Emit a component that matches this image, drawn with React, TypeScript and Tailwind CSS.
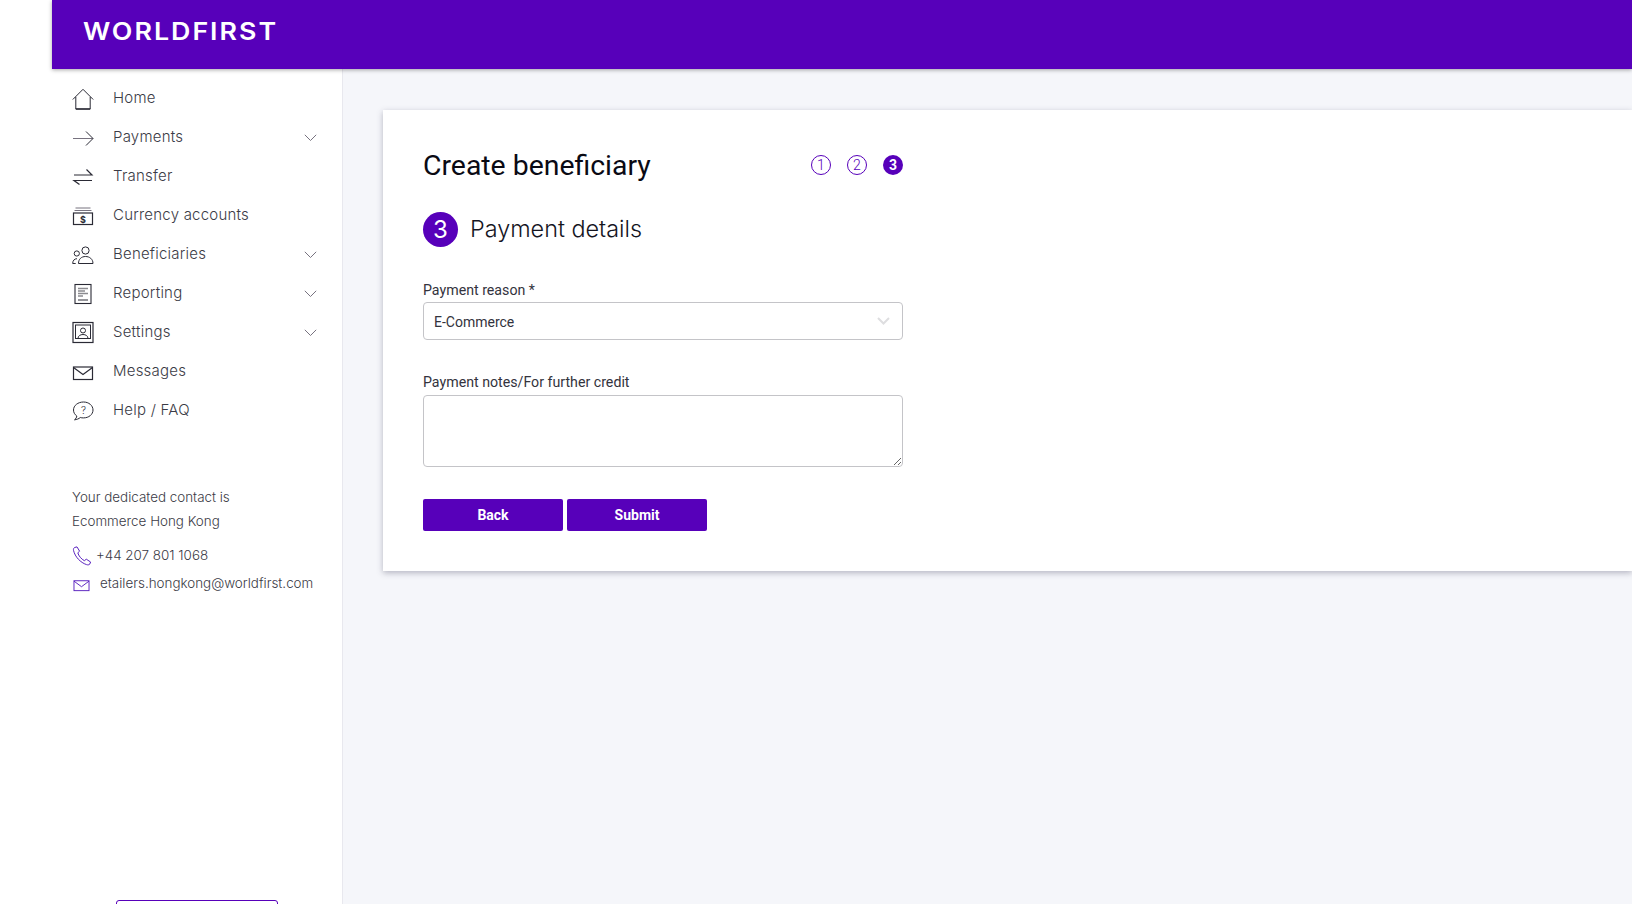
import React from "react";

const Chevron = () => (
  <svg width="13" height="8" viewBox="0 0 13 8" fill="none" stroke="#77727f" strokeWidth="1"><path d="M0.8 0.8 6.5 6.5 12.2 0.8" /></svg>
);

const s = { fill: "none", stroke: "#2a2a35", strokeWidth: 1 };
const HomeI = () => (<svg width="24" height="24" viewBox="0 0 24 24" {...s}><path d="M1.800 12.500 12 2.300l10.200 10.200" /><path d="M4.800 10v12h14.400V10" /><path d="M4.800 22h14.400" strokeWidth="1.400" /></svg>);
const ArrowI = () => (<svg width="24" height="24" viewBox="0 0 24 24" {...s}><path d="M2 12.500h20" stroke="#77727f" /><path d="M15 5.500l7 7-7 7" /></svg>);
const TransferI = () => (<svg width="24" height="24" viewBox="0 0 24 24" {...s} strokeWidth="1.200"><path d="M3 10h18l-5.500-5.500" /><path d="M21 15.500H3l5.500 4" /></svg>);
const CurrencyI = () => (<svg width="24" height="24" viewBox="0 0 24 24" {...s}><path d="M4.500 4h15M3.500 6.500h17" stroke="#77727f" /><rect x="2.500" y="9" width="19" height="11.500" strokeWidth="1.200" /><text x="12" y="18.500" textAnchor="middle" fontSize="9" fontFamily="Inter, sans-serif" fontWeight="700" fill="#2a2a35" stroke="none">$</text></svg>);
const PeopleI = () => (<svg width="24" height="24" viewBox="0 0 24 24" {...s}><circle cx="14.500" cy="7.500" r="3.600" /><circle cx="5.800" cy="10.500" r="2.600" /><path d="M7.500 20.500c0-4.500 3-7 7-7s7.500 2.500 7.500 7z" /><path d="M1.700 20.500c0-2.800 1.600-4.800 4.300-4.800" /><path d="M1.700 20.500h3" /></svg>);
const ReportI = () => (<svg width="24" height="24" viewBox="0 0 24 24" {...s}><rect x="4" y="2.500" width="16" height="19" strokeWidth="1.100" /><path d="M7 6.500h10M7 9h7M7 11.500h10M7 14h5" stroke="#8b8b90" strokeWidth="1.400" /><path d="M7 18h10" /></svg>);
const SettingsI = () => (<svg width="24" height="24" viewBox="0 0 24 24" {...s}><rect x="2" y="1.500" width="20" height="20" strokeWidth="1.200" /><rect x="4.500" y="4" width="15" height="13.500" /><circle cx="12" cy="9.500" r="2.500" /><path d="M7 17.500c0-2.600 2.300-4 5-4s5 1.400 5 4" /></svg>);
const MailI = ({ w = 24, c = "#2a2a35" }: { w?: number; c?: string }) => (<svg width={w} height={w} viewBox="0 0 24 24" fill="none" stroke={c} strokeWidth="1.200"><rect x="2.500" y="6" width="19" height="12.500" /><path d="M2.500 6.500 12 13.500l9.500-7" /></svg>);
const HelpI = () => (<svg width="24" height="24" viewBox="0 0 24 24" {...s}><path d="M12.500 3C7 3 2.500 6.500 2.500 11c0 2.500 1.200 4.500 3.300 6-.2 1.500-.8 2.600-2.300 3.800 2.300-.2 4.300-1 5.800-2.300 1 .3 2 .4 3.200.400 5.300 0 9.500-3.400 9.500-7.900S17.800 3 12.500 3z" /><text x="12.500" y="15" textAnchor="middle" fontSize="10" fontFamily="Inter, sans-serif" fill="#2a2a35" stroke="none">?</text></svg>);
const PhoneI = () => (<svg width="20" height="20" viewBox="0 0 20 20" fill="none" stroke="#5a22bf" strokeWidth="1"><path d="M2.500 1.500 5 .9l2.600 4.300L5.800 6.800c.7 2.900 3.600 6.400 6.600 7.900l1.900-1.500 4.300 2.800-.9 2.200c-.8.800-2 .8-3.200.4C8.500 16.500 3 11 1.500 4.300c-.2-1.200.2-2.200 1-2.800z" /></svg>);

const nav: { label: string; icon: React.ReactNode; chev?: boolean; down?: boolean }[] = [
  { label: "Home", icon: <HomeI /> },
  { label: "Payments", icon: <ArrowI />, chev: true },
  { label: "Transfer", icon: <TransferI /> },
  { label: "Currency accounts", icon: <CurrencyI /> },
  { label: "Beneficiaries", icon: <PeopleI />, chev: true },
  { label: "Reporting", icon: <ReportI />, chev: true },
  { label: "Settings", icon: <SettingsI />, chev: true },
  { label: "Messages", icon: <MailI />, down: true },
  { label: "Help / FAQ", icon: <HelpI /> },
];

export default function App() {
  return (
    <div className="flex h-[904px] overflow-hidden bg-white font-['Inter',sans-serif]">
      <div className="w-[52px] shrink-0" />
      <div className="flex min-w-0 flex-1 flex-col">
        <header className="relative z-10 flex h-[69px] shrink-0 items-start bg-[#5700ba] pl-[31px] pt-[16px] shadow-[0_1px_4px_rgba(0,0,0,0.35)]">
          <span className="origin-left scale-x-[1.115] text-[24px] font-semibold leading-[32px] tracking-[0.075em] text-white font-['Inter',sans-serif]">WORLDFIRST</span>
        </header>
        <div className="flex min-h-0 flex-1">
          <aside className="flex w-[291px] shrink-0 flex-col border-r border-[#e8e8ee] bg-white pl-[19px] pr-[25px] pt-[10px]">
            <nav className="flex flex-col">
              {nav.map((n) => (
                <div key={n.label} className="flex h-[39px] items-center text-[15px] font-light text-[#3b3b46]">
                  <span className={n.down ? "flex h-[24px] w-[24px] translate-y-[1px] items-center justify-center" : "flex h-[24px] w-[24px] items-center justify-center"}>{n.icon}</span>
                  <span className="ml-[18px] flex-1 tracking-[0.015em]">{n.label}</span>
                  {n.chev && <Chevron />}
                </div>
              ))}
            </nav>
            <div className="ml-[1px] mt-[55px] text-[13.4px] font-light leading-[24px] text-[#3b3b46]">
              <p>Your dedicated contact is</p>
              <p>Ecommerce Hong Kong</p>
              <div className="mt-[10px] flex h-[24px] items-center gap-[4px]">
                <span className="translate-y-[1px]"><PhoneI /></span>
                <span>+44 207 801 1068</span>
              </div>
              <div className="mt-[5px] flex h-[24px] items-center gap-[9px]">
                <span className="translate-y-[1px]"><MailI w={19} c="#5a22bf" /></span>
                <span className="-translate-y-[1px]">etailers.hongkong@worldfirst.com</span>
              </div>
            </div>
            <div className="mt-auto -mb-[20px] ml-[45px] h-[24px] w-[162px] shrink-0 rounded-[3px] border-[1.5px] border-[#5700ba]" />
          </aside>
          <main className="min-w-0 flex-1 bg-[#f5f6fa] pl-[40px] pt-[41px]">
            <section className="h-[461px] bg-white pl-[40px] pt-[36px] shadow-[0_2px_6px_rgba(60,60,90,0.35)]">
              <div className="w-[480px] font-['Roboto',sans-serif]">
                <div className="flex h-[38px] items-center justify-between">
                  <h1 className="translate-y-[1px] text-[28.4px] font-normal leading-[38px] text-[#0a0a14]">Create beneficiary</h1>
                  <div className="flex gap-[16px] text-[14px]">
                    <span className="flex h-[20px] w-[20px] items-center justify-center rounded-full border border-[#5700ba] font-light text-[#5700ba]">1</span>
                    <span className="flex h-[20px] w-[20px] items-center justify-center rounded-full border border-[#5700ba] font-light text-[#5700ba]">2</span>
                    <span className="flex h-[20px] w-[20px] items-center justify-center rounded-full bg-[#5700ba] font-bold text-white">3</span>
                  </div>
                </div>
                <div className="mt-[28px] flex h-[35px] items-center gap-[12px]">
                  <span className="flex h-[35px] w-[35px] items-center justify-center rounded-full bg-[#5700ba] text-[24px] font-normal text-white font-['Inter',sans-serif]">3</span>
                  <h2 className="-translate-y-[1px] text-[23.4px] font-light text-[#15151f] font-['Inter',sans-serif]">Payment details</h2>
                </div>
                <label className="mt-[33px] block text-[14.2px] leading-[20px] text-[#33333d]">Payment reason *</label>
                <div className="mt-[2px] flex h-[38px] items-center justify-between rounded-[4px] border border-[#c4c4c8] pl-[10px] pr-[12px] text-[14px] text-[#33333d]">
                  <span className="translate-y-[1px]">E-Commerce</span>
                  <svg width="13" height="8" viewBox="0 0 13 8" fill="none" stroke="#dedee0" strokeWidth="2"><path d="M1 1l5.500 5.500L12 1" /></svg>
                </div>
                <label className="mt-[32px] block text-[14.2px] leading-[20px] text-[#33333d]">Payment notes/For further credit</label>
                <textarea className="mt-[3px] block h-[72px] w-[480px] rounded-[4px] border border-[#c4c4c8] bg-white outline-none" />
                <div className="mt-[32px] flex gap-[4px]">
                  <button className="h-[32px] w-[140px] rounded-[2px] bg-[#5700ba] text-[14px] font-bold text-white">Back</button>
                  <button className="h-[32px] w-[140px] rounded-[2px] bg-[#5700ba] text-[14px] font-bold text-white">Submit</button>
                </div>
              </div>
            </section>
          </main>
        </div>
      </div>
    </div>
  );
}
